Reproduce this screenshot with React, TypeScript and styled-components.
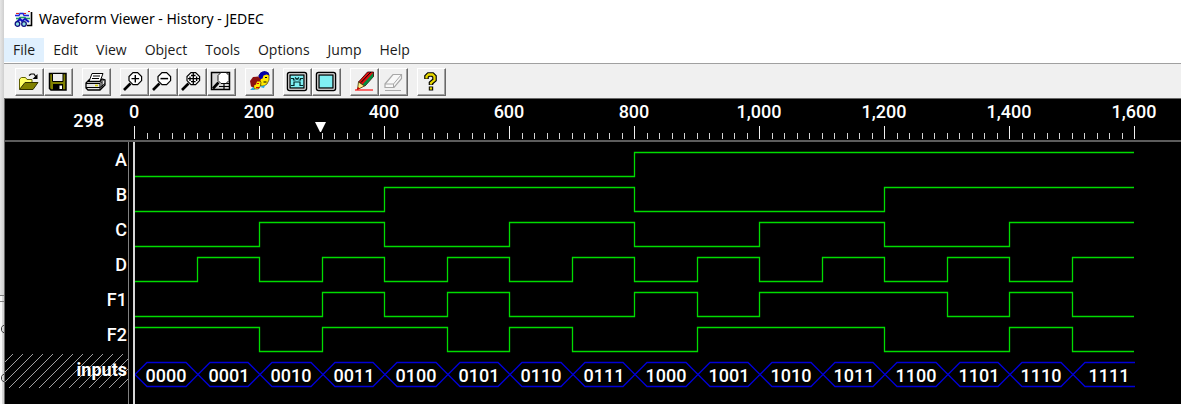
import React from "react";
import styled, { createGlobalStyle } from "styled-components";

const GlobalStyle = createGlobalStyle`
  * { box-sizing: border-box; }
  body { margin: 0; background: #fff; }
`;

const uiFont = `"Open Sans", "Noto Sans", sans-serif`;
const titleFont = `"Noto Sans", "Open Sans", sans-serif`;
const plotFont = `Roboto, "Liberation Sans", sans-serif`;

const Desktop = styled.div`
  display: flex;
  min-height: 100vh;
  overflow: hidden;
`;
const Behind = styled.div`
  flex: none;
  width: 4px;
  background: linear-gradient(to right, #e6e6e6, #cfcfcf);
  svg { display: block; }
`;
const Window = styled.main`
  flex: 1;
  min-width: 0;
  display: flex;
  flex-direction: column;
  background: #fff;
`;
const TitleBar = styled.header`
  display: flex;
  align-items: center;
  gap: 6px;
  height: 38px;
  padding-left: 10px;
  svg { flex: none; }
`;
const Title = styled.h1`
  margin: 0;
  font: 400 14px/20px ${titleFont};
  color: #000;
`;
const MenuBar = styled.nav`
  display: flex;
  height: 25px;
  background: #fff;
`;
const MenuItem = styled.button<{ $active?: boolean }>`
  height: 24px;
  padding: 0 9px;
  border: 0;
  background: ${(p) => (p.$active ? "#e0f0fe" : "transparent")};
  color: #1a1a1a;
  font: 400 14px/24px ${uiFont};
`;
const Toolbar = styled.div`
  display: flex;
  gap: 9px;
  height: 35px;
  padding: 4px 0 0 11px;
  border-top: 1px solid #a0a0a0;
  background: #f0f0f0;
`;
const ToolGroup = styled.div`
  display: flex;
`;
const ToolButton = styled.button`
  display: block;
  width: 29px;
  height: 28px;
  padding: 0;
  border: 1px solid;
  border-color: #fff #696969 #696969 #fff;
  box-shadow: inset -1px -1px 0 #a0a0a0;
  background: #f0f0f0;
  svg { display: block; }
`;
const Viewer = styled.section`
  flex: 1;
  display: flex;
  flex-direction: column;
  border-top: 1px solid #696969;
  border-left: 1px solid #696969;
  background: #000;
  color: #fff;
  font: 700 18px/35px ${plotFont};
`;
const RulerRow = styled.div`
  display: flex;
  height: 43px;
  border-bottom: 2px solid #5c5c5c;
`;
const CursorTime = styled.output`
  flex: none;
  width: 124px;
  padding: 4px 25px 0 0;
  text-align: right;
  font-weight: 500;
`;
const Plot = styled.svg`
  flex: 1;
  min-width: 0;
  height: 100%;
  overflow: hidden;
  display: block;
`;
const Body = styled.div`
  flex: 1;
  display: flex;
`;
const Names = styled.ul`
  flex: none;
  width: 124px;
  margin: 0;
  padding: 0;
  list-style: none;
  border-right: 1px solid #808080;
`;
const Name = styled.li`
  position: relative;
  height: 35px;
  padding-right: 1px;
  text-align: right;
  font-weight: 500;
`;
const BusName = styled(Name)`
  font-weight: 700;
  span { position: relative; }
`;
const Hatch = styled.svg`
  position: absolute;
  left: 0;
  top: 2px;
`;
const Chart = styled.div`
  flex: 1;
  min-width: 0;
  display: flex;
  min-height: 262px;
  margin-left: 4px;
  border-left: 2px solid #d8d8d8;
`;

/* Time axis: 200 time units take 125 pixels. */
const END = 1600;
const toX = (t: number) => Math.round(t * 0.625);

const signals: { name: string; start: 0 | 1; edges: number[] }[] = [
  { name: "A", start: 0, edges: [800] },
  { name: "B", start: 0, edges: [400, 800, 1200] },
  { name: "C", start: 0, edges: [200, 400, 600, 800, 1000, 1200, 1400] },
  { name: "D", start: 0, edges: Array.from({ length: 15 }, (_, i) => (i + 1) * 100) },
  { name: "F1", start: 0, edges: [300, 400, 500, 600, 800, 900, 1000, 1300, 1400, 1500] },
  { name: "F2", start: 1, edges: [200, 300, 500, 600, 700, 900, 1200, 1400, 1500] },
];

const tracePath = (start: 0 | 1, edges: number[], top: number) => {
  const y = (level: number) => top + (level ? 10.5 : 34.5);
  let level: number = start;
  let d = `M-1 ${y(level)}`;
  edges.forEach((t) => {
    d += `H${toX(t) - 0.5}`;
    level = 1 - level;
    d += `V${y(level)}`;
  });
  return `${d}H${toX(END) - 1}`;
};

const values = Array.from({ length: 16 }, (_, i) => i.toString(2).padStart(4, "0"));

const Ruler = () => (
  <Plot aria-label="Time ruler">
    {Array.from({ length: 81 }, (_, i) => {
      const major = i % 10 === 0;
      return (
        <rect key={i} x={5 + toX(i * 20)} y={major ? 27 : 34} width="1" height={major ? 13 : 6} fill={major ? "#f0f0f0" : "#d4d4d4"} />
      );
    })}
    {Array.from({ length: 9 }, (_, i) => (
      <text key={i} x={5 + toX(i * 200)} y="19" textAnchor="middle" fill="#fff" fontWeight="500">
        {(i * 200).toLocaleString("en-US")}
      </text>
    ))}
    <path d="M186 23h11l-5 10h-1z" fill="#fff" />
  </Plot>
);

const Waves = () => (
  <Plot aria-label="Waveforms">
    <g fill="none" stroke="#00dc00" strokeWidth="1.3">
      {signals.map((s, i) => (
        <path key={s.name} d={tracePath(s.start, s.edges, i * 35)} />
      ))}
    </g>
    {values.map((v, i) => {
      const a = toX(i * 100);
      const b = toX((i + 1) * 100);
      const last = i === 15;
      return (
        <g key={v}>
          <path
            d={
              last
                ? `M${a} 232.5L${a + 12} 220.5H${b}M${a} 232.5L${a + 12} 244.5H${b}`
                : `M${a} 232.5L${a + 12} 220.5H${b - 12}L${b} 232.5L${b - 12} 244.5H${a + 12}Z`
            }
            fill="none"
            stroke="#0000d8"
            strokeWidth="1.3"
          />
          <text x={last ? a + 36 : a + 31} y="240" textAnchor="middle" fill="#fff" fontWeight="500">
            {v}
          </text>
        </g>
      );
    })}
  </Plot>
);

const Svg = ({ children }: { children: React.ReactNode }) => (
  <svg width="27" height="26" viewBox="1 1 27 26" aria-hidden="true">
    {children}
  </svg>
);

const Lens = ({ children }: { children?: React.ReactNode }) => (
  <Svg>
    <path d="M10.5 15.5L4 22" stroke="#000" strokeWidth="2.6" fill="none" />
    <path d="M13 4.6h4.6l4 4v4l-4 4H13l-4-4v-4z" fill="#fff" stroke="#000" strokeWidth="1.2" />
    {children}
  </Svg>
);

const icons: Record<string, React.ReactNode> = {
  Open: (
    <Svg>
      <path d="M4.5 21V11l2-1.5h4l1.5 2h5V14" fill="#ffff66" stroke="#606000" />
      <path d="M4.5 21.5L10 14.5h13L18 21.5z" fill="#808000" stroke="#303000" />
      <path d="M14 7.5l2-1.5h3l2 3" fill="none" stroke="#000" strokeWidth="1.2" />
      <path d="M22.5 6v5h-5z" fill="#000" />
    </Svg>
  ),
  Save: (
    <Svg>
      <path d="M5.5 5.5H22V22H7l-1.5-1.5z" fill="#808000" stroke="#000" strokeWidth="1.5" />
      <path d="M8.5 5.5h10.5v8H8.5z" fill="#f0f0f0" stroke="#000" />
      <path d="M9 16h10v6H9z" fill="#000" />
      <path d="M15.5 17.5H18V21h-2.5z" fill="#fff" />
    </Svg>
  ),
  Print: (
    <Svg>
      <path d="M10 5.5h11l-3 8H7z" fill="#fff" stroke="#000" />
      <path d="M11 8h7M10 10.5h7" stroke="#000" />
      <path d="M7 12l-3 3v5l2 2h12l5-5v-5l-3-1-2 2.5H7z" fill="#e4e4e4" stroke="#000" strokeWidth="1.3" />
      <path d="M4 15.5h14l4-4M4 19.5h14l5-4M18 15.5V22M20 14v6" stroke="#000" fill="none" />
      <path d="M13 17.5h3" stroke="#d8d000" strokeWidth="1.6" />
    </Svg>
  ),
  "Zoom in": (
    <Lens>
      <path d="M11.5 10.6h7.6M15.3 7v7.6" stroke="#000" strokeWidth="1.4" />
    </Lens>
  ),
  "Zoom out": (
    <Lens>
      <path d="M11.5 10.6h7.6" stroke="#000" strokeWidth="1.5" />
    </Lens>
  ),
  "Zoom to point": (
    <Lens>
      <path d="M10 10.6h11M15.3 5v11.5M13 7.5h4.6M13 13.7h4.6M12 8.4v4.6M18.6 8.4v4.6" stroke="#000" strokeWidth="1.3" />
    </Lens>
  ),
  "Zoom to fit": (
    <Svg>
      <path d="M4.5 4.5h18v17h-18z" fill="#d8d8d8" stroke="#000" strokeWidth="1.5" />
      <path d="M14 15.5h8M12 18.5h10M17 15v6.5" stroke="#000" strokeWidth="1.2" />
      <path d="M11.5 14.5L6 20.5" stroke="#000" strokeWidth="2.6" />
      <path d="M14 4.5h5l3 3v5l-3 3h-5l-3-3v-5z" fill="#fff" stroke="#000" strokeWidth=".9" />
    </Svg>
  ),
  Compare: (
    <Svg>
      <path d="M14 7l3-3h5l2 3v5l-2 4-3 2h-3l-2-3z" fill="#ffe800" stroke="#201800" strokeWidth=".6" />
      <path d="M13.5 8l2-3.5 4-1.5 4 1.5 1 3-3-1-3 1-1 3-3 1z" fill="#0000a8" />
      <path d="M20 9.5h2M18.5 14h3" stroke="#000" />
      <path d="M8 12l5-1 3 3-.5 4-2 3H9z" fill="#ffe800" stroke="#201800" strokeWidth=".6" />
      <path d="M5 13l3-4 5-.5 3 3-1 2h-3l-1 3-2 1v2l-3-1z" fill="#8c1010" />
      <path d="M12 15.5h2M11 19.5h3" stroke="#e00000" />
      <path d="M5 22l3-3 2 3zM15 19l5-2-1 3z" fill="#20a8e0" />
    </Svg>
  ),
  Waveforms: (
    <Svg>
      <rect x="4.5" y="4.5" width="19" height="18" rx="2" fill="#fff" stroke="#000" strokeWidth="1.5" />
      <rect x="7" y="7" width="14" height="13" fill="#80f0f4" stroke="#000" strokeWidth="1.3" />
      <path d="M8 10.5h2.500v1.500h2M20 10.500h-2.500V12h-2M12 9.500l2 2 2-2M8 17.500h3V14h6v3.500h3" fill="none" stroke="#002828" strokeWidth="1.2" />
    </Svg>
  ),
  "Blank screen": (
    <Svg>
      <rect x="4.5" y="4.5" width="19" height="18" rx="2" fill="#fff" stroke="#000" strokeWidth="1.5" />
      <rect x="7" y="7" width="14" height="13" fill="#80f0f4" stroke="#000" strokeWidth="1.3" />
    </Svg>
  ),
  Edit: (
    <Svg>
      <path d="M8.5 14L17.500 4H23.500V8.500L15 18z" fill="#e01010" stroke="#200000" strokeWidth=".8" />
      <path d="M12.500 16.500L23 5V9L15 18z" fill="#009040" />
      <path d="M11 14.500L21 4" stroke="#000" />
      <path d="M8.5 14l6 4-7 3.5z" fill="#ffee80" stroke="#403000" strokeWidth=".8" />
      <path d="M5 22h18" stroke="#ff1010" strokeWidth="1.2" />
      <path d="M6.5 22l1.5-3 2 1.5z" fill="#d00000" />
    </Svg>
  ),
  Erase: (
    <Svg>
      <path d="M6 16l8-9.5h8.5v4L15 19.5H6z" fill="#f8f8f8" stroke="#a8a8a8" strokeWidth="1.2" />
      <path d="M6 16h8.5l8-9.5M14.5 16v3.5" fill="none" stroke="#a8a8a8" />
      <path d="M6 22.5h16" stroke="#a8a8a8" />
    </Svg>
  ),
  Help: (
    <Svg>
      <path d="M9.5 11V8.5l2-2h4l2 2V12l-3.5 3v2" fill="none" stroke="#000" strokeWidth="4.6" />
      <path d="M11.8 18.5h4.4v4h-4.4z" fill="#000" />
      <path d="M9.5 10.5V8.5l2-2h4l2 2V12l-3.5 3v1.5" fill="none" stroke="#e8d800" strokeWidth="2.3" />
      <path d="M12.8 19.3h2.3v2.3h-2.3z" fill="#e8d800" />
    </Svg>
  ),
};

const groups = [
  ["Open", "Save"],
  ["Print"],
  ["Zoom in", "Zoom out", "Zoom to point", "Zoom to fit"],
  ["Compare"],
  ["Waveforms", "Blank screen"],
  ["Edit", "Erase"],
  ["Help"],
];

const menus = ["File", "Edit", "View", "Object", "Tools", "Options", "Jump", "Help"];

export default function App() {
  return (
    <>
      <GlobalStyle />
      <Desktop>
        <Behind>
          <svg width="4" height="404" aria-hidden="true">
            <path d="M0 295.5h4M0 301.5h4" stroke="#808080" />
            <path d="M0 296h2v5H0zM0 302h2v102H0z" fill="#f8f8f8" />
            <path d="M4 325.5H3l-1.5 2v3l1.5 2h1M4 374.5H3l-1.5 2v3l1.5 2h1" fill="none" stroke="#404040" />
          </svg>
        </Behind>
        <Window>
          <TitleBar>
            <svg width="19" height="18" viewBox="0 0 19 18" aria-hidden="true">
              <path d="M2 2h14v12H2z" fill="#e8f4f4" />
              <path d="M17.5 2v13.5H13" fill="none" stroke="#000" strokeWidth="1.6" />
              <path d="M2 3.5h3M8 3.5h4M14 1.5h2" stroke="#e02020" strokeWidth="1.2" />
              <path d="M1 5.5h4l1-2h3l1 2h5" fill="none" stroke="#2020e0" strokeWidth="1.3" />
              <path d="M2 8.5h3l1-1h5l1 1h4" fill="none" stroke="#20a060" strokeWidth="1.3" />
              <path d="M2 13l4-4 2 2 3-2 4 3" fill="none" stroke="#1010c0" strokeWidth="2" />
              <circle cx="3.5" cy="14" r="2.3" fill="#90e0e0" stroke="#101080" strokeWidth="1.3" />
              <circle cx="10" cy="14" r="2.3" fill="#90e0e0" stroke="#101080" strokeWidth="1.3" />
            </svg>
            <Title>Waveform Viewer - History - JEDEC</Title>
          </TitleBar>
          <MenuBar>
            {menus.map((m) => (
              <MenuItem key={m} type="button" $active={m === "File"}>
                {m}
              </MenuItem>
            ))}
          </MenuBar>
          <Toolbar role="toolbar">
            {groups.map((g) => (
              <ToolGroup key={g[0]}>
                {g.map((name) => (
                  <ToolButton key={name} type="button" aria-label={name}>
                    {icons[name]}
                  </ToolButton>
                ))}
              </ToolGroup>
            ))}
          </Toolbar>
          <Viewer>
            <RulerRow>
              <CursorTime>298</CursorTime>
              <Ruler />
            </RulerRow>
            <Body>
              <Names>
                {signals.map((s) => (
                  <Name key={s.name}>{s.name}</Name>
                ))}
                <BusName>
                  <Hatch width="123" height="34" aria-hidden="true">
                    {Array.from({ length: 16 }, (_, i) => (
                      <path key={i} d={`M${i * 10 - 26} 34l34-34`} stroke="#a0a0a0" />
                    ))}
                  </Hatch>
                  <span>inputs</span>
                </BusName>
              </Names>
              <Chart>
                <Waves />
              </Chart>
            </Body>
          </Viewer>
        </Window>
      </Desktop>
    </>
  );
}
